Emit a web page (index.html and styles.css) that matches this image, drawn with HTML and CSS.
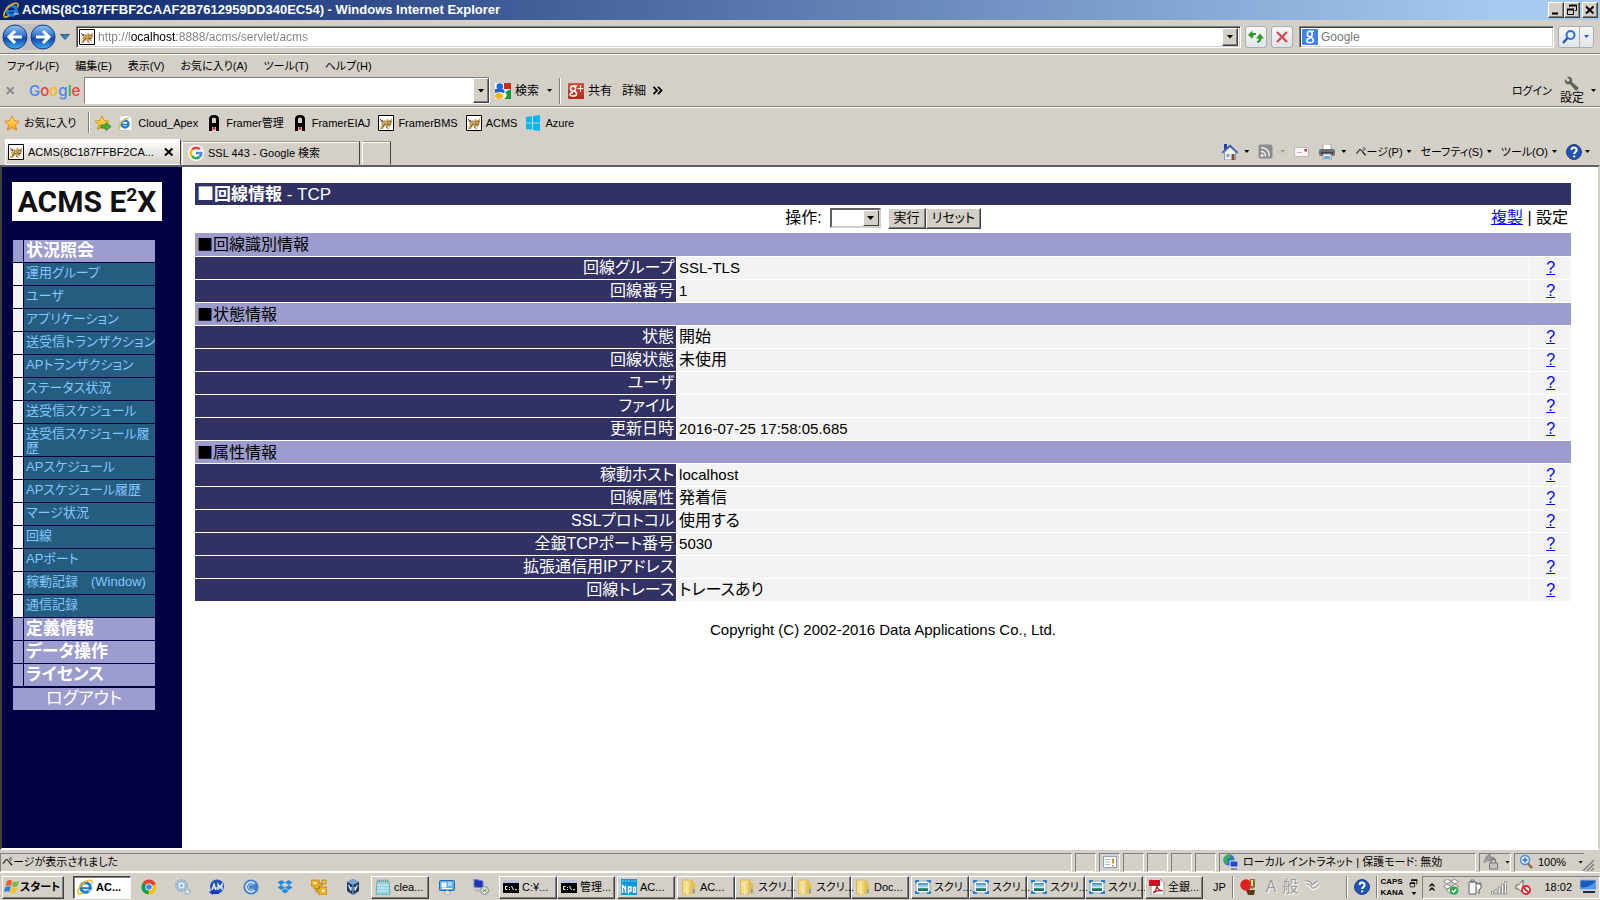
FILE: index.html
```html
<!DOCTYPE html>
<html lang="ja">
<head>
<meta charset="utf-8">
<title>ACMS - Windows Internet Explorer</title>
<link rel="stylesheet" href="styles.css">
</head>
<body>
<svg class="defs" aria-hidden="true">
  <defs>
    <linearGradient id="g-blue" x1="0" y1="0" x2="0" y2="1"><stop offset="0" stop-color="#8fc4f4"/><stop offset=".45" stop-color="#2f74cf"/><stop offset=".55" stop-color="#0f47a8"/><stop offset="1" stop-color="#3fb0f5"/></linearGradient>
    <linearGradient id="g-folder" x1="0" y1="0" x2="1" y2="0"><stop offset="0" stop-color="#fbeeb0"/><stop offset="1" stop-color="#dcb544"/></linearGradient>
    <linearGradient id="g-star" x1="0" y1="0" x2="0" y2="1"><stop offset="0" stop-color="#ffe97a"/><stop offset="1" stop-color="#f5a300"/></linearGradient>
    <linearGradient id="g-plus" x1="0" y1="0" x2="0" y2="1"><stop offset="0" stop-color="#d9503f"/><stop offset="1" stop-color="#b5291c"/></linearGradient>
    <linearGradient id="g-sky" x1="0" y1="0" x2="0" y2="1"><stop offset="0" stop-color="#3a86c8"/><stop offset=".6" stop-color="#d8eef8"/><stop offset=".7" stop-color="#2e8a5a"/><stop offset="1" stop-color="#1a5a80"/></linearGradient>
  </defs>
  <symbol id="ie" viewBox="0 0 16 16"><circle cx="8.5" cy="8.5" r="4.8" fill="none" stroke="#1b7fd6" stroke-width="3"/><path d="M5 9.2h10" stroke="#1b7fd6" stroke-width="2"/><path d="M11 10.8h5v2h-5z" fill="#fff" opacity=".5"/><path d="M1.5 15C-1 11 6 2 12.500 1.200c3-.3 3 2 1.800 4.300" fill="none" stroke="#f3b61f" stroke-width="1.500"/><path d="M1.500 15c1.500.6 3-.4 4.500-1.400" fill="none" stroke="#f3b61f" stroke-width="1.500"/></symbol>
  <symbol id="iepage" viewBox="0 0 16 16"><path d="M2 .5h9l3 3v12H2z" fill="#fff" stroke="#c8c8c8"/><circle cx="7" cy="9" r="3.500" fill="none" stroke="#1b7fd6" stroke-width="2.400"/><path d="M4 9.500h7" stroke="#1b7fd6" stroke-width="1.600"/><path d="M1.500 14C-.5 11 5 3.500 11 3" fill="none" stroke="#f3b61f" stroke-width="1.300"/></symbol>
  <symbol id="cat" viewBox="0 0 16 16"><path d="M.5.5h15v15H.5z" fill="#fff" stroke="#000"/><path d="M2 14l1-5 3-4 2 1 1-2.500L10.500 5H12l2-1.500V8l-2 2 1 3-4-1-2-1-2 3z" fill="#c9a05a"/><path d="M2 4l3 3M2.500 7L5 5M4 12l3-3M9 9l2 1 2-1M10 6.500v1M12.500 6v1M8 12l3 2" stroke="#5d5648" fill="none"/><path d="M2 9l2.500 1L3 13zM10 11l4 2.500h-4z" fill="#f4ecd8"/></symbol>
  <symbol id="framer" viewBox="0 0 10 16"><path fill-rule="evenodd" d="M0 16V4q0-4 5-4t5 4v12H7v-4H3v4zM3 8h4V4q0-1.500-2-1.500T3 4z" fill="#000"/><circle cx="5" cy="13.500" r="1.400" fill="#d0213c"/></symbol>
  <symbol id="win8" viewBox="0 0 16 16"><path d="M1 2l6-.8v6.300H1zM8 1l7-1v7.500H8zM1 8.500h6v6.200L1 14zM8 8.500h7V16l-7-1z" fill="#00b7f1"/></symbol>
  <symbol id="gsearch" viewBox="0 0 16 16"><path d="M0 0h16v16H0z" fill="#fff"/><path d="M9 0h7v6H9z" fill="#e8201c"/><path d="M16 6v10H9q5-3 1-7l6-3z" fill="#139a3e"/><circle cx="4.800" cy="3.500" r="3.300" fill="#2263e5"/><path d="M0 6h6q5 0 3 4l-4-1-5 1z" fill="#2263e5"/><ellipse cx="4" cy="13" rx="4" ry="3" fill="#f8b514"/></symbol>
  <symbol id="gplus" viewBox="0 0 16 16"><rect width="16" height="16" rx="1" fill="url(#g-plus)"/><ellipse cx="5" cy="5.500" rx="2.500" ry="2.600" fill="none" stroke="#fff" stroke-width="1.500"/><path d="M5 3h4M6 8c4 2 3 5-1 5s-4-3 0-3.500" fill="none" stroke="#fff" stroke-width="1.400"/><path d="M12.500 2v7M9.500 5.500h6" stroke="#fff"/></symbol>
  <symbol id="gg" viewBox="0 0 16 16"><circle cx="8" cy="8" r="8" fill="#fff"/><g fill="none" stroke-width="2.600"><path d="M4 4.700A5.200 5.200 0 0 1 11.900 4.400" stroke="#ea4335"/><path d="M4 11.300a5.200 5.200 0 0 1 0-6.600" stroke="#fbbc05"/><path d="M11.700 11.800A5.200 5.200 0 0 1 4 11.300" stroke="#34a853"/><path d="M8 8h5.200q0 2.500-1.500 3.800" stroke="#4285f4"/></g></symbol>
  <symbol id="g8" viewBox="0 0 16 16"><rect width="16" height="16" rx="1" fill="#3f83f1"/><ellipse cx="7.800" cy="5" rx="2.400" ry="2.700" fill="none" stroke="#fff" stroke-width="1.600"/><path d="M8 2.200h4M8 7.700c5 2 4 6 0 6s-5-4 .5-4.500" fill="none" stroke="#fff" stroke-width="1.500"/></symbol>
  <symbol id="star" viewBox="0 0 16 16"><path d="M8 .8l2.200 4.900 5.200.6-3.900 3.600 1.100 5.300L8 12.500l-4.600 2.700 1.100-5.300L.6 6.300l5.200-.6z" fill="url(#g-star)" stroke="#c98410" stroke-width=".8"/></symbol>
  <symbol id="staradd" viewBox="0 0 16 16"><path d="M7 .8l2 4.700 5 .6-3.700 3.400 1 5L7 12l-4.400 2.500 1-5L0 6.100l5-.6z" fill="url(#g-star)" stroke="#c98410" stroke-width=".8"/><path d="M6 10h5V7.500l5 4-5 4V13H6z" fill="#48b536" stroke="#1f7a18" stroke-width=".7"/></symbol>
  <symbol id="refresh" viewBox="0 0 16 16"><path d="M0 6l4.500-4.500V4H8v2H5.500v2H4.500v2z" fill="#2c9b2c"/><path d="M12 4.500l4 5h-2.500q0 4-4.500 4.500v-2q2-.5 2-2.500H8z" fill="#2c9b2c"/></symbol>
  <symbol id="stop" viewBox="0 0 16 16"><path d="M3 3l10 10M13 3L3 13" stroke="#d2474b" stroke-width="2.200"/></symbol>
  <symbol id="lens" viewBox="0 0 16 16"><circle cx="9.500" cy="6" r="4" fill="#e8f3ff" stroke="#2b6fe0" stroke-width="2"/><path d="M6.500 9L2 14" stroke="#1c55c0" stroke-width="2.400"/></symbol>
  <symbol id="lensp" viewBox="0 0 16 16"><circle cx="7" cy="6" r="4.500" fill="#d9ecff" stroke="#4b8fdc" stroke-width="1.500"/><path d="M10 9.500l4 4.500" stroke="#9a6a3a" stroke-width="2.600"/><path d="M7 3.500v5M4.500 6h5" stroke="#2b6fe0" stroke-width="1.500"/></symbol>
  <symbol id="wrench" viewBox="0 0 16 16"><path d="M1 3l3 3 2-2-3-3c4-1 6 2 5 5l7 6-3 3-6-7C3 9 0 7 1 3z" fill="#5d6257"/></symbol>
  <symbol id="home" viewBox="0 0 16 16"><path d="M2 0h3v4L2 6z" fill="#2340b8"/><path d="M2.500 8L8 3l5.500 5v8h-11z" fill="#eef3fb" stroke="#8a98b8"/><path d="M0 9l8-7.500L16 9" fill="none" stroke="#2e52b5" stroke-width="1.600"/><path d="M4.500 10h3v3h-3z" fill="#8a9bb8"/><path d="M9.500 10h3v6h-3z" fill="#8b4a2a"/></symbol>
  <symbol id="rss" viewBox="0 0 16 16"><rect x=".5" y=".5" width="14" height="14" rx="2" fill="#8c8c8c"/><circle cx="4" cy="11.500" r="1.500" fill="#eee"/><path d="M3 7.500q4.500 0 4.500 5M3 3.800q8.300 0 8.300 8.700" fill="none" stroke="#eee" stroke-width="1.600"/></symbol>
  <symbol id="mail" viewBox="0 0 16 16"><path d="M.5 3.500h14v9H.5z" fill="#f6f6f6" stroke="#b4b8be"/><path d="M10.500 5h2.500v2.500h-2.500z" fill="#d92b2b"/><path d="M3 8.500h5" stroke="#c8b0b0"/></symbol>
  <symbol id="printer" viewBox="0 0 16 16"><path d="M4 0h8v6H4z" fill="#fff" stroke="#aaa"/><rect x="0" y="5" width="16" height="7" rx="2" fill="#6c7077"/><path d="M2 8h12v2H2z" fill="#3d4046"/><path d="M4 10h8v6H4z" fill="#fff" stroke="#999"/><path d="M5 12h6v3H5z" fill="#6aa8e0"/></symbol>
  <symbol id="help" viewBox="0 0 16 16"><circle cx="8" cy="8" r="7.400" fill="#2355b8" stroke="#16357c"/><path d="M5.600 6c0-3.200 5-3.200 5 0 0 2-2.400 2-2.400 4" fill="none" stroke="#fff" stroke-width="2"/><path d="M7.200 11.500h2v1.800h-2z" fill="#fff"/></symbol>
  <symbol id="globe" viewBox="0 0 16 16"><circle cx="6" cy="6" r="5.700" fill="#2d6fd0"/><path d="M1 4c2-4 6-4 7-3L7 4 4 5l1 4-2 1Q0 7 1 4zM8 6l3-1v3L9 9z" fill="#38b54a"/><path d="M7 7h8v6H7z" fill="#2b44c8" stroke="#dce6f4"/><path d="M8 14h6v2H8z" fill="#8590a8"/></symbol>
  <symbol id="winflag" viewBox="0 0 16 16"><path d="M3 2q3-2 5 0L7 7Q4 5.500 1.500 7z" fill="#e8582a"/><path d="M9 2.300q3 1.700 6-.2L13.500 7q-3 2-5.500.2z" fill="#7cb83a"/><path d="M1.300 8q3-1.500 5.500 0l-1.500 5Q3 11.500 0 13z" fill="#2f7fd6"/><path d="M7.700 8.300q3 1.700 5.600 0L12 13.200q-3 2-5.700.2z" fill="#f6bf26"/></symbol>
  <symbol id="chrome" viewBox="0 0 16 16"><circle cx="8" cy="8" r="7.500" fill="#f4c20d"/><path d="M8 8L1.500 4.200A7.500 7.500 0 0 1 14.800 5z" fill="#db4437"/><path d="M8 8l-.5 7.500A7.500 7.500 0 0 1 1.500 4.200z" fill="#0f9d58"/><circle cx="8" cy="8" r="3.600" fill="#fff"/><circle cx="8" cy="8" r="2.800" fill="#4285f4"/></symbol>
  <symbol id="gears" viewBox="0 0 16 16"><circle cx="6.500" cy="6.500" r="5.500" fill="none" stroke="#8fb4d0" stroke-width="2" stroke-dasharray="2.400 1"/><circle cx="6.500" cy="6.500" r="3.800" fill="#e6f1f8" stroke="#9bbdd6" stroke-width="1.500"/><circle cx="6.500" cy="6.500" r="1.500" fill="#8fb4d0"/><circle cx="12.500" cy="12.500" r="2.500" fill="#dbe6ee" stroke="#93a8b8" stroke-width="1.500" stroke-dasharray="1.500 .7"/></symbol>
  <symbol id="acircle" viewBox="0 0 16 16"><circle cx="8" cy="7.500" r="7" fill="#2055b8"/><path d="M3 11l2-6 2 6M9 11V5l2 3 2-3v6M3.500 9h9" fill="none" stroke="#fff" stroke-width="1.100"/><path d="M0 13l4-2v1.500h6V15H4v1z" fill="#1034c8"/></symbol>
  <symbol id="ccircle" viewBox="0 0 16 16"><circle cx="8" cy="8" r="7.600" fill="#4380ce"/><path d="M11.500 4.800a4.800 4.800 0 1 0 0 6.400" fill="none" stroke="#d6e6fa" stroke-width="1.800"/><path d="M10 6.500a2.500 2.500 0 1 0 0 3" fill="none" stroke="#b9d2f2"/></symbol>
  <symbol id="dropbox" viewBox="0 0 16 16"><path d="M4.500 1L8 3.500 4 6 .5 3.500zM11.500 1l4 2.500L12 6 8 3.500zM4 6l4 2.500L4.500 11 .5 8.500zM12 6l3.500 2.500-4 2.500L8 8.500zM4.500 12L8 9.500l3.500 2.500L8 14.500z" fill="#1a8be8"/></symbol>
  <symbol id="vmware" viewBox="0 0 16 16"><path d="M0 1h8v3h3v3H8v3H3V7H0zM8 8h8v8H8v-3H5v-3h3z" fill="#eeb12c" stroke="#a8720c" stroke-width=".7"/><path d="M2.500 3h3v2h-3zM11 10.500h2.500V13H11z" fill="#fff7dc"/><path d="M11 1h4v4h-4z" fill="#f2c14e" stroke="#a8720c" stroke-width=".7"/></symbol>
  <symbol id="vbox" viewBox="0 0 16 16"><path d="M8 0l6 3v9l-6 4-6-4V3z" fill="#1d3a60"/><path d="M2 3l6 3 6-3-6-3z" fill="#7ea7d0"/><path d="M8 6v10" stroke="#9cc0e4"/><path d="M3.500 6L6 11.500V8M12.500 6L10 11.500V8" stroke="#dce9f6" fill="none" stroke-width="1.300"/></symbol>
  <symbol id="note" viewBox="0 0 16 16"><path d="M2 2h12l1 14H1z" fill="#8fd0dc" stroke="#5a98a8" stroke-width=".7"/><path d="M2 6h12M2 9h12M2 12h12" stroke="#d9f3f6"/><path d="M2 1.500h12" stroke="#8a8f94" stroke-width="2" stroke-dasharray="1 1"/></symbol>
  <symbol id="panel" viewBox="0 0 16 16"><rect x=".5" y="1.500" width="15" height="10" rx="1" fill="#5eb0ea" stroke="#2c6ca8"/><path d="M3 4h4v4H3zM9 4h4M9 6h4M3 9.500h10" fill="#e8f6ff" stroke="#fff"/><path d="M5 14l3-3 4 3-3 2z" fill="#e8e8e8" stroke="#888" stroke-width=".6"/></symbol>
  <symbol id="remote" viewBox="0 0 16 16"><path d="M1 0l9 2v7L1 8z" fill="#1a33c0" stroke="#7b87a6"/><path d="M3 10l7 1-3 2-6-1z" fill="#b4bac6"/><circle cx="11.500" cy="11.500" r="4" fill="#dfe6dc" stroke="#889"/><path d="M9.500 10l2 1.500-2 1.500M13.500 10l-2 1.500 2 1.500" fill="none" stroke="#2d9b2d"/></symbol>
  <symbol id="cmd" viewBox="0 0 16 16"><path d="M0 2h16v12H0z" fill="#000"/><path d="M0 1h16v3H0z" fill="#b8c4dc"/><path d="M4.500 7.500h-2v3h2M6.500 8v.8M6.500 10v.8M8.500 7l2 4M12 10.700h2" fill="none" stroke="#fff"/></symbol>
  <symbol id="mpo" viewBox="0 0 16 16"><path d="M0 0h16v16H0z" fill="#0c98dc"/><path d="M1 2h14" stroke="#7fd0f5" stroke-dasharray="2 1"/><path d="M1.500 14V6.500l3 4V6.500V14M7.500 15V8h2.500v4H7.500M12.500 8.500h2V13h-2z" fill="none" stroke="#fff" stroke-width="1.400"/></symbol>
  <symbol id="folder" viewBox="0 0 16 16"><path d="M1.500 1H8v14H1.500z" fill="#f4dd86" stroke="#d0aa48" stroke-width=".7"/><path d="M5 2.500L12 0v14l-7 2z" fill="url(#g-folder)"/><path d="M12 4h2.500v11h-6z" fill="#e5bf55"/><path d="M12.800 10v4" stroke="#4aa4dc" stroke-width="1.500"/></symbol>
  <symbol id="pic" viewBox="0 0 16 16"><path d="M1 2h14v12H1z" fill="#fff" stroke="#8caac4"/><path d="M3 4h10v8H3z" fill="url(#g-sky)"/><path d="M1 4V2h3M12 2h3v2M1 12v2h3M12 14h3v-2" fill="none" stroke="#2f83cc" stroke-width="2"/></symbol>
  <symbol id="pdf" viewBox="0 0 16 16"><path d="M2 0h9l4 4v12H2z" fill="#fff" stroke="#999"/><path d="M0 1h11v6H0z" fill="#c4161c"/><path d="M4 14c4-3 4-6 4-8 0 4 2 5 6 6-4-1-7 0-10 2z" fill="none" stroke="#c4161c" stroke-width="1.200"/></symbol>
  <symbol id="pen" viewBox="0 0 16 16"><circle cx="6" cy="6" r="5.700" fill="#e02020"/><path d="M10 0h5v8l-3 2-2-2z" fill="#8a6a30"/><path d="M6 11h9l-1 5H8z" fill="#5a3a18"/><path d="M11 1h2v6h-2z" fill="#f1d58a"/></symbol>
  <symbol id="hand" viewBox="0 0 16 16"><path d="M1 3q5-1 7 4l6-4M2 6q4 0 6 4 4 1 7-4" fill="none" stroke="#fff" stroke-width="2"/><path d="M1 2q5-1 7 4l6-4M2 5q4 0 6 4 4 1 7-4" fill="none" stroke="#999" stroke-width="1.200"/></symbol>
  <symbol id="dbtray" viewBox="0 0 16 16"><path d="M4.500 0L8 2.500 4 5 .5 2.500zM11.500 0l4 2.500L12 5 8 2.500zM4 5l4 2.500L4.500 10 .5 7.500zM12 5l3.500 2.500-4 2.500L8 7.500zM3 11l4-2 2 2-1 4z" fill="#f4f4f4" stroke="#777" stroke-width=".8"/><circle cx="11" cy="11.500" r="4.300" fill="#2fa84f"/><path d="M9 11.500l1.500 1.700 2.700-3" fill="none" stroke="#fff" stroke-width="1.400"/></symbol>
  <symbol id="plug" viewBox="0 0 16 16"><path d="M2 3h7v12H2zM4 1h3v2H4z" fill="#f4f4f4" stroke="#666"/><path d="M9 5h5v4l-2 2v4M10 3v2M13 3v2" fill="#fff" stroke="#555"/></symbol>
  <symbol id="signal" viewBox="0 0 16 16"><path d="M.5 12.500h2V15h-2zM4 10.500h2V15H4zM7.300 8h2v7h-2zM10.600 5h2v10h-2zM13.500 2.500h2V15h-2z" fill="#fff" stroke="#777" stroke-width=".7"/></symbol>
  <symbol id="mute" viewBox="0 0 16 16"><path d="M1 6h2.500L8 1v13L3.500 10H1z" fill="#e8e8e8" stroke="#666"/><circle cx="11" cy="11" r="4" fill="#fff" stroke="#d8242c" stroke-width="1.800"/><path d="M8.500 8.500l5 5" stroke="#d8242c" stroke-width="1.800"/></symbol>
  <symbol id="desk" viewBox="0 0 16 16"><path d="M0 1h16v9H0z" fill="#1d5bb8" stroke="#9db4d0"/><path d="M0 8q8 2 16-6v8H0z" fill="#4f9be8"/><path d="M3 12h12v2H3z" fill="#1b2a44"/></symbol>
  <symbol id="alert" viewBox="0 0 16 16"><path d="M1.500 2.500h13v11h-13z" fill="#fff" stroke="#8aa0bc"/><path d="M3 5.500h5M3 8h5M3 10.500h5" stroke="#a9b8cc"/><path d="M11 4.500v5M11 11v1.500" stroke="#e8902a" stroke-width="2"/></symbol>
  <symbol id="lock" viewBox="0 0 16 16"><path d="M1 9q1-6 6-6 3 0 5 2M7 0L3 3.500 7 7z" fill="#a8a8a8" stroke="#8d8d8d" stroke-width="1.300"/><path d="M6.500 9h8v6h-8z" fill="#c4c4c4" stroke="#777"/><path d="M8.500 9V7q0-2 2-2t2 2v2" fill="none" stroke="#777" stroke-width="1.300"/></symbol>
  <symbol id="restore" viewBox="0 0 12 12"><path d="M3.500 3V1.500h7v5H9" fill="none" stroke="#000"/><path d="M3 1.500h8" stroke="#000" stroke-width="2"/><path d="M1.500 5.500h6v5h-6z" fill="none" stroke="#000"/><path d="M1 5.500h7" stroke="#000" stroke-width="2"/></symbol>
  <symbol id="x" viewBox="0 0 12 12"><path d="M2 2.500l7.500 7M9.500 2.500L2 9.500" stroke="currentColor" stroke-width="2"/></symbol>
</svg>

<div class="window">
  <header class="titlebar">
    <svg class="i16"><use href="#ie"/></svg>
    <h1 class="caption">ACMS(8C187FFBF2CAAF2B7612959DD340EC54) - Windows Internet Explorer</h1>
    <div class="winbtns">
      <button class="wbtn" aria-label="最小化"><svg viewBox="0 0 12 12"><path d="M2 9.500h6" stroke="#000" stroke-width="2"/></svg></button>
      <button class="wbtn" aria-label="元に戻す"><svg><use href="#restore"/></svg></button>
      <button class="wbtn wclose" aria-label="閉じる"><svg><use href="#x"/></svg></button>
    </div>
  </header>

  <div class="addressrow">
    <div class="navbtns">
      <button class="round" aria-label="戻る"><svg viewBox="0 0 26 26"><circle cx="13" cy="13" r="12" fill="url(#g-blue)" stroke="#1b3f85"/><path d="M13 7l-6 6 6 6M7.500 13H20" fill="none" stroke="#fff" stroke-width="3"/></svg></button>
      <button class="round" aria-label="進む"><svg viewBox="0 0 26 26"><circle cx="13" cy="13" r="12" fill="url(#g-blue)" stroke="#1b3f85"/><path d="M13 7l6 6-6 6M18.500 13H6" fill="none" stroke="#fff" stroke-width="3"/></svg></button>
    </div>
    <svg class="hist" viewBox="0 0 10 6"><path d="M.5.5h9L5 5.500z" fill="#2e86cc" stroke="#173d78" stroke-width=".7"/></svg>
    <div class="field address">
      <svg class="i16"><use href="#cat"/></svg>
      <input class="url" type="text" aria-label="アドレス" value="http://localhost:8888/acms/servlet/acms">
      <button class="drop" aria-label="履歴"><i class="tri"></i></button>
    </div>
    <button class="soft" aria-label="更新"><svg class="i16"><use href="#refresh"/></svg></button>
    <button class="soft" aria-label="中止"><svg class="i16"><use href="#stop"/></svg></button>
    <div class="field search">
      <svg class="i16"><use href="#g8"/></svg>
      <input type="text" aria-label="検索" placeholder="Google">
    </div>
    <div class="split"><button aria-label="検索する"><svg class="i16"><use href="#lens"/></svg></button><button aria-label="検索オプション"><i class="tri blue"></i></button></div>
  </div>

  <nav class="menubar">
    <button>ファイル(F)</button><button>編集(E)</button><button>表示(V)</button><button>お気に入り(A)</button><button>ツール(T)</button><button>ヘルプ(H)</button>
  </nav>

  <div class="googlebar">
    <button class="gx" aria-label="ツールバーを閉じる"><svg><use href="#x"/></svg></button>
    <span class="glogo"><b class="c1">G</b><b class="c2">o</b><b class="c3">o</b><b class="c1">g</b><b class="c4">l</b><b class="c2">e</b></span>
    <div class="field gfield"><input type="text" aria-label="Google 検索"><button class="drop" aria-label="候補"><i class="tri"></i></button></div>
    <button class="gsearch"><svg class="i16"><use href="#gsearch"/></svg>検索<i class="tri"></i></button>
    <span class="vsep"></span>
    <button class="gshare"><svg class="i16"><use href="#gplus"/></svg>共有</button>
    <button class="gmore">詳細<svg class="chev" viewBox="0 0 12 10"><path d="M1 1l4 4-4 4M6 1l4 4-4 4" fill="none" stroke="#000" stroke-width="2"/></svg></button>
    <button class="login">ログイン</button>
    <button class="gset"><span class="gsetcol"><svg class="i16"><use href="#wrench"/></svg>設定</span><i class="tri"></i></button>
  </div>

  <nav class="favbar">
    <button class="favmain"><svg class="i16"><use href="#star"/></svg>お気に入り</button>
    <span class="vsep"></span>
    <button aria-label="お気に入りに追加" class="favadd"><svg class="i16"><use href="#staradd"/></svg></button>
    <a href="#"><svg class="i16"><use href="#iepage"/></svg>Cloud_Apex</a>
    <a href="#"><svg class="i16"><use href="#framer"/></svg>Framer管理</a>
    <a href="#"><svg class="i16"><use href="#framer"/></svg>FramerEIAJ</a>
    <a href="#"><svg class="i16"><use href="#cat"/></svg>FramerBMS</a>
    <a href="#"><svg class="i16"><use href="#cat"/></svg>ACMS</a>
    <a href="#"><svg class="i16"><use href="#win8"/></svg>Azure</a>
  </nav>

  <div class="tabrow">
    <div class="tab active"><svg class="i16"><use href="#cat"/></svg><span class="tabtext">ACMS(8C187FFBF2CA...</span><button class="tabx" aria-label="タブを閉じる"><svg><use href="#x"/></svg></button></div>
    <div class="tab"><svg class="i16"><use href="#gg"/></svg><span class="tabtext">SSL 443 - Google 検索</span></div>
    <button class="tab newtab" aria-label="新しいタブ"></button>
    <div class="cmdbar">
      <button aria-label="ホーム"><svg class="i16"><use href="#home"/></svg><i class="tri far"></i></button>
      <button aria-label="フィード"><svg class="i16"><use href="#rss"/></svg><i class="tri far dim"></i></button>
      <button aria-label="メール"><svg class="i16"><use href="#mail"/></svg></button>
      <button aria-label="印刷"><svg class="i16"><use href="#printer"/></svg><i class="tri far"></i></button>
      <button class="wide">ページ(P)<i class="tri"></i></button>
      <button class="wide">セーフティ(S)<i class="tri"></i></button>
      <button class="wide">ツール(O)<i class="tri"></i></button>
      <button aria-label="ヘルプ"><svg class="i16"><use href="#help"/></svg><i class="tri"></i></button>
    </div>
  </div>

  <div class="viewport">
    <aside class="sidebar">
      <div class="logo">ACMS&nbsp;E<sup>2</sup>X</div>
      <ul class="nav">
        <li class="head"><a href="#">状況照会</a></li>
        <li><a href="#">運用グループ</a></li>
        <li><a href="#">ユーザ</a></li>
        <li><a href="#">アプリケーション</a></li>
        <li><a href="#">送受信トランザクション</a></li>
        <li><a href="#">APトランザクション</a></li>
        <li><a href="#">ステータス状況</a></li>
        <li><a href="#">送受信スケジュール</a></li>
        <li><a href="#">送受信スケジュール履<br>歴</a></li>
        <li><a href="#">APスケジュール</a></li>
        <li><a href="#">APスケジュール履歴</a></li>
        <li><a href="#">マージ状況</a></li>
        <li><a href="#">回線</a></li>
        <li><a href="#">APポート</a></li>
        <li><a href="#">稼動記録　(Window)</a></li>
        <li><a href="#">通信記録</a></li>
        <li class="head"><a href="#">定義情報</a></li>
        <li class="head"><a href="#">データ操作</a></li>
        <li class="head"><a href="#">ライセンス</a></li>
      </ul>
      <a class="logout" href="#">ログアウト</a>
    </aside>

    <main class="main">
      <h2 class="pagetitle"><span class="sq">■</span>回線情報 <span class="thin">- TCP</span></h2>
      <div class="ops">
        <form class="opform">
          <label for="op">操作:</label>
          <span class="selwrap"><select id="op"><option></option></select><i class="selarrow"><i class="tri"></i></i></span>
          <button type="button" class="cbtn run">実行</button><button type="reset" class="cbtn">リセット</button>
        </form>
        <div class="oplinks"><a href="#">複製</a> | 設定</div>
      </div>
      <table class="info">
        <colgroup><col class="c-label"><col class="c-value"><col class="c-help"></colgroup>
        <tbody>
          <tr><th class="sec" colspan="3"><span class="sq">■</span>回線識別情報</th></tr>
          <tr><th>回線グループ</th><td class="lat">SSL-TLS</td><td class="q"><a href="#">?</a></td></tr>
          <tr><th>回線番号</th><td class="lat">1</td><td class="q"><a href="#">?</a></td></tr>
          <tr><th class="sec" colspan="3"><span class="sq">■</span>状態情報</th></tr>
          <tr><th>状態</th><td>開始</td><td class="q"><a href="#">?</a></td></tr>
          <tr><th>回線状態</th><td>未使用</td><td class="q"><a href="#">?</a></td></tr>
          <tr><th>ユーザ</th><td></td><td class="q"><a href="#">?</a></td></tr>
          <tr><th>ファイル</th><td></td><td class="q"><a href="#">?</a></td></tr>
          <tr><th>更新日時</th><td class="lat">2016-07-25 17:58:05.685</td><td class="q"><a href="#">?</a></td></tr>
          <tr><th class="sec" colspan="3"><span class="sq">■</span>属性情報</th></tr>
          <tr><th>稼動ホスト</th><td class="lat">localhost</td><td class="q"><a href="#">?</a></td></tr>
          <tr><th>回線属性</th><td>発着信</td><td class="q"><a href="#">?</a></td></tr>
          <tr><th>SSLプロトコル</th><td>使用する</td><td class="q"><a href="#">?</a></td></tr>
          <tr><th>全銀TCPポート番号</th><td class="lat">5030</td><td class="q"><a href="#">?</a></td></tr>
          <tr><th>拡張通信用IPアドレス</th><td></td><td class="q"><a href="#">?</a></td></tr>
          <tr><th>回線トレース</th><td>トレースあり</td><td class="q"><a href="#">?</a></td></tr>
        </tbody>
      </table>
      <p class="copy">Copyright (C) 2002-2016 Data Applications Co., Ltd.</p>
    </main>
  </div>

  <footer class="status">
    <div class="pane msg">ページが表示されました</div>
    <div class="pane box"></div>
    <div class="pane box"><svg class="i16"><use href="#alert"/></svg></div>
    <div class="pane box"></div>
    <div class="pane box"></div>
    <div class="pane box"></div>
    <div class="pane box"></div>
    <div class="pane zone"><svg class="i16"><use href="#globe"/></svg>ローカル イントラネット | 保護モード: 無効</div>
    <div class="pane lockp"><svg class="i16"><use href="#lock"/></svg><i class="tri"></i></div>
    <div class="pane zoomp"><svg class="i16"><use href="#lensp"/></svg>100%<i class="tri"></i></div>
    <svg class="grip" viewBox="0 0 12 12"><path d="M1 12L12 1M5 12l7-7M9 12l3-3" stroke="#808080" stroke-width="1.500"/></svg>
  </footer>

  <div class="taskbar">
    <button class="tbtn start"><svg class="i16"><use href="#winflag"/></svg>スタート</button>
    <button class="tbtn on"><svg class="i16"><use href="#ie"/></svg>AC...</button>
    <div class="quick"><svg><use href="#chrome"/></svg><svg><use href="#gears"/></svg><svg><use href="#acircle"/></svg><svg><use href="#ccircle"/></svg><svg><use href="#dropbox"/></svg><svg><use href="#vmware"/></svg><svg><use href="#vbox"/></svg></div>
    <button class="tbtn"><svg class="i16"><use href="#note"/></svg>clea...</button>
    <div class="quick"><svg><use href="#panel"/></svg><svg><use href="#remote"/></svg></div>
    <div class="tgroup"><button class="tbtn"><svg class="i16"><use href="#cmd"/></svg>C:¥...</button><button class="tbtn"><svg class="i16"><use href="#cmd"/></svg>管理...</button></div>
    <div class="tgroup"><button class="tbtn"><svg class="i16"><use href="#mpo"/></svg>AC...</button></div>
    <div class="tgroup"><button class="tbtn"><svg class="i16"><use href="#folder"/></svg>AC...</button><button class="tbtn"><svg class="i16"><use href="#folder"/></svg>スクリ...</button><button class="tbtn"><svg class="i16"><use href="#folder"/></svg>スクリ...</button><button class="tbtn"><svg class="i16"><use href="#folder"/></svg>Doc...</button></div>
    <div class="tgroup"><button class="tbtn"><svg class="i16"><use href="#pic"/></svg>スクリ...</button><button class="tbtn"><svg class="i16"><use href="#pic"/></svg>スクリ...</button><button class="tbtn"><svg class="i16"><use href="#pic"/></svg>スクリ...</button><button class="tbtn"><svg class="i16"><use href="#pic"/></svg>スクリ...</button></div>
    <div class="tgroup"><button class="tbtn"><svg class="i16"><use href="#pdf"/></svg>全銀...</button></div>
    <div class="ime">
      <span class="jp">JP</span><span class="vsep"></span>
      <svg class="i16"><use href="#pen"/></svg>
      <span class="mode alpha">A</span><span class="mode">般</span><svg class="i16"><use href="#hand"/></svg>
      <span class="vsep last"></span>
      <svg class="i16"><use href="#help"/></svg>
      <span class="vsep near"></span>
      <span class="caps"><span>CAPS</span><span>KANA</span></span>
      <span class="capsicons"><svg viewBox="0 0 12 12"><use href="#restore"/></svg><i class="tri"></i></span>
    </div>
    <div class="tray">
      <svg class="up" viewBox="0 0 6 10"><path d="M.5 4.500L3 2l2.500 2.500M.5 8.500L3 6l2.500 2.500" fill="none" stroke="#000" stroke-width="1.300"/></svg>
      <svg class="i16"><use href="#dbtray"/></svg><svg class="i16"><use href="#plug"/></svg><svg class="i16"><use href="#signal"/></svg><svg class="i16"><use href="#mute"/></svg>
      <time>18:02</time>
      <svg class="i16"><use href="#desk"/></svg>
    </div>
  </div>
</div>
</body>
</html>
```
FILE: styles.css
```css
* { box-sizing: border-box; }

:root {
  --face: #d4d0c8;
  --shadow: #808080;
  --dark: #404040;
  --navy: #000042;
  --indigo: #313163;
  --lilac: #9c9cce;
  --teal: #245d80;
}

body {
  margin: 0;
  background: var(--face);
  color: #000;
  font: 11px/16px "Liberation Sans", "Noto Sans CJK JP", sans-serif;
  font-feature-settings: "palt";
}

button, input, select {
  margin: 0;
  padding: 0;
  border: 0;
  background: none;
  color: inherit;
  font: inherit;
  font-feature-settings: inherit;
}

button { white-space: nowrap; }
svg { display: block; flex: none; }
.defs { position: absolute; width: 0; height: 0; }
.i16 { width: 16px; height: 16px; }

.tri {
  display: block;
  flex: none;
  width: 5px;
  height: 3px;
  background: #000;
  clip-path: polygon(0 0, 100% 0, 50% 100%);
}
.tri.blue { background: #1560d8; }
.tri.dim { background: #999; }

.vsep {
  flex: none;
  width: 2px;
  border-left: 1px solid var(--shadow);
  border-right: 1px solid #fff;
}

.window {
  display: flex;
  flex-direction: column;
  min-height: 100vh;
}

/* title bar */
.titlebar {
  display: flex;
  align-items: center;
  gap: 3px;
  height: 20px;
  padding: 0 2px 0 3px;
  background: linear-gradient(90deg, #0a246a, #a6caf0 94%);
}
.caption {
  flex: 1;
  margin: 0;
  color: #fff;
  font-size: 13px;
  line-height: 20px;
  font-weight: bold;
}
.winbtns { display: flex; }
.wbtn {
  display: flex;
  align-items: center;
  justify-content: center;
  width: 16px;
  height: 16px;
  background: var(--face);
  border: 1px solid;
  border-color: #fff var(--dark) var(--dark) #fff;
  box-shadow: inset -1px -1px var(--shadow);
}
.wbtn svg { width: 12px; height: 12px; }
.wclose { margin-left: 2px; }

/* address row */
.addressrow {
  display: flex;
  align-items: center;
  gap: 4px;
  height: 34px;
  padding: 0 6px 0 2px;
  border-bottom: 1px solid var(--shadow);
  box-shadow: 0 1px #fff;
  font-size: 12px;
}
.navbtns {
  display: flex;
  gap: 2px;
  border-radius: 13px;
  background: #c0c0c0;
}
.round { width: 26px; height: 26px; }
.round svg { width: 26px; height: 26px; }
.hist { width: 10px; height: 6px; margin-right: 2px; }
.field {
  display: flex;
  align-items: center;
  gap: 3px;
  height: 22px;
  padding-left: 1px;
  background: #fff;
  border: 1px solid;
  border-color: var(--shadow) #fff #fff var(--shadow);
  box-shadow: inset 1px 1px var(--dark), inset -1px -1px var(--face);
}
.field input { flex: 1; min-width: 0; height: 16px; outline: 0; }
.address { flex: 1; padding: 0 2px; }
.address .url {
  color: transparent;
  caret-color: #000;
  background: linear-gradient(90deg, #808080 33px, #000 33px, #000 79px, #808080 79px);
  -webkit-background-clip: text;
  background-clip: text;
}
.drop {
  display: flex;
  align-items: center;
  justify-content: center;
  width: 16px;
  height: 18px;
  background: var(--face);
  border: 1px solid;
  border-color: #fff var(--dark) var(--dark) #fff;
  box-shadow: inset -1px -1px var(--shadow);
}
.drop .tri, .selarrow .tri { width: 7px; height: 4px; }
.soft, .split {
  display: flex;
  align-items: center;
  justify-content: center;
  height: 22px;
  background: linear-gradient(#f6f6f6, #e2e4e8);
  border: 1px solid #a9adb8;
  border-radius: 3px;
}
.soft { width: 22px; }
.search { width: 255px; margin-left: 2px; padding-left: 2px; }
.search input::placeholder { color: #777; opacity: 1; }
.split button { display: flex; align-items: center; justify-content: center; height: 20px; width: 20px; }
.split button + button { width: 14px; border-left: 1px solid #a9adb8; }

/* menu */
.menubar {
  display: flex;
  gap: 16px;
  height: 21px;
  padding: 2px 7px 0;
}

/* Google toolbar */
.googlebar {
  display: flex;
  align-items: center;
  height: 32px;
  padding-right: 4px;
  border-bottom: 1px solid var(--shadow);
  box-shadow: 0 1px #fff;
}
.gx { margin: 0 13px 0 5px; color: #888; }
.gx svg { width: 11px; height: 11px; }
.glogo { width: 55px; font: 15px/26px Inter, sans-serif; }
.glogo b { font-weight: 500; }
.c1 { color: #4285f4; }
.c2 { color: #ea4335; }
.c3 { color: #fbbc05; }
.c4 { color: #34a853; }
.gfield { width: 406px; height: 27px; box-shadow: none; }
.gfield .drop { height: 25px; }
.gsearch, .gshare, .gmore, .gset { font-size: 12px; }
.gsearch, .gshare { display: flex; align-items: center; gap: 4px; }
.gsearch { margin: 0 7px 0 5px; }
.gsearch .tri { margin-left: 4px; }
.googlebar .vsep { height: 26px; margin-right: 7px; }
.gmore { display: flex; align-items: center; gap: 6px; margin-left: 10px; }
.chev { width: 12px; height: 9px; }
.login { margin-left: auto; }
.gset { display: flex; align-items: center; gap: 7px; margin-left: 8px; }
.gsetcol { display: flex; flex-direction: column; align-items: center; line-height: 13px; }

/* favorites */
.favbar {
  display: flex;
  align-items: center;
  gap: 8px;
  height: 31px;
  padding: 0 4px;
}
.favbar a, .favmain { display: flex; align-items: center; gap: 4px; color: #000; text-decoration: none; }
.favbar .vsep { height: 21px; margin: 0 -3px 0 4px; }
.favadd { margin-right: -1px; }

/* tabs */
.tabrow {
  display: flex;
  align-items: flex-end;
  height: 27px;
  padding-left: 5px;
}
.tab {
  display: flex;
  align-items: center;
  gap: 4px;
  width: 178px;
  height: 24px;
  margin-left: 1px;
  padding: 0 5px;
  border: 1px solid;
  border-color: #9a978f var(--dark) transparent #fff;
  box-shadow: inset 0 1px #fff;
}
.tab.active {
  width: 176px;
  height: 26px;
  margin-left: 0;
  padding-left: 2px;
  background: linear-gradient(#fff, #d4d0c8);
  border-top-color: #fff;
}
.tabtext { flex: 1; white-space: nowrap; }
.tabx svg { width: 12px; height: 12px; }
.tab.newtab { width: 29px; margin-left: 2px; }
.cmdbar { display: flex; align-items: center; height: 27px; gap: 9px; margin-left: auto; padding-right: 10px; }
.cmdbar button { display: flex; align-items: center; gap: 3px; }
.cmdbar .tri.far { margin-left: 3px; }
.cmdbar .wide { gap: 4px; }

/* page */
.viewport {
  display: flex;
  flex: 1;
  background: #fff;
  border: 2px solid;
  border-color: var(--dark) var(--face) #fff var(--dark);
  border-top-color: #606060;
}
.sidebar {
  flex: none;
  width: 180px;
  padding: 15px 27px 0 11px;
  background: var(--navy);
}
.logo {
  width: 150px;
  height: 39px;
  margin: 0 0 19px -1px;
  background: #fff;
  color: #111;
  font: bold 30px/39px Roboto, "Liberation Sans", sans-serif;
  text-align: center;
  white-space: nowrap;
}
.logo sup { font-size: 19px; line-height: 0; }
.nav { display: grid; gap: 1px; margin: 0; padding: 0; list-style: none; }
.nav li { display: grid; grid-template-columns: 10px 1fr; gap: 1px; min-height: 22px; }
.nav li::before { content: ""; background: #f2f2f2; }
.nav a {
  display: block;
  padding: 3px 0 1px 2px;
  background: var(--teal);
  color: #84c6ff;
  font-size: 13px;
  line-height: 14px;
  text-decoration: none;
  white-space: nowrap;
}
.nav .head::before, .nav .head a { background: var(--lilac); }
.nav .head a { padding-top: 0; padding-bottom: 0; color: #fff; font-size: 17px; line-height: 22px; font-weight: bold; }
.logout {
  display: block;
  margin-top: 2px;
  background: var(--lilac);
  color: #fff;
  font-size: 17px;
  line-height: 22px;
  text-align: center;
  text-decoration: none;
}

.main { flex: 1; padding: 16px 27px 0 13px; font-size: 16px; line-height: 22px; }
.sq { font-family: "Noto Sans CJK JP", sans-serif; font-feature-settings: normal; }
.pagetitle {
  height: 22px;
  margin: 0;
  padding-left: 2px;
  background: var(--indigo);
  color: #fff;
  font-size: 17px;
  line-height: 20px;
}
.thin { font-weight: normal; }
.ops { display: grid; grid-template-columns: 1fr auto 1fr; align-items: center; height: 28px; padding-bottom: 2px; }
.opform { grid-column: 2; display: flex; align-items: center; }
.selwrap { position: relative; margin: 0 7px 0 8px; }
.selwrap select {
  appearance: none;
  display: block;
  width: 51px;
  height: 20px;
  background: #fff;
  border: 2px solid;
  border-color: #606060 var(--face) var(--face) #606060;
  border-radius: 0;
}
.selarrow {
  position: absolute;
  top: 2px;
  right: 2px;
  display: flex;
  align-items: center;
  justify-content: center;
  width: 16px;
  height: 16px;
  background: var(--face);
  border: 1px solid;
  border-color: #fff var(--dark) var(--dark) #fff;
  pointer-events: none;
}
.cbtn {
  height: 21px;
  padding: 0 5px;
  background: var(--face);
  border: 1px solid;
  border-color: #fff var(--dark) var(--dark) #fff;
  box-shadow: inset -1px -1px var(--shadow);
  font-size: 13px;
  line-height: 18px;
}
.oplinks { padding-right: 3px; text-align: right; line-height: 20px; }
a { color: #00f; }

.info { width: 100%; border-collapse: collapse; table-layout: fixed; }
.c-label { width: 35%; }
.c-help { width: 3%; }
.info tr + tr { border-top: 1px solid #fff; }
.info th, .info td { height: 23px; padding: 0 2px; line-height: 20px; font-weight: normal; }
.info th { background: var(--indigo); color: #fff; text-align: right; }
.info td { background: #f3f3f3; border-left: 1px solid #fff; }
.info .lat { font-size: 15px; }
.info .q { text-align: center; }
.info .sec { background: var(--lilac); color: #000; text-align: left; }
.copy { margin: 18px 0 0; font-size: 15px; line-height: 22px; text-align: center; }

/* status bar */
.status { display: flex; align-items: center; gap: 3px; height: 22px; padding: 2px 6px 0 0; }
.pane {
  display: flex;
  align-items: center;
  gap: 4px;
  height: 19px;
  padding: 0 3px;
  border: 1px solid;
  border-color: var(--shadow) #fff #fff var(--shadow);
}
.msg { flex: 1; padding-left: 1px; }
.box { width: 21px; padding: 0 2px; }
.zone { width: 257px; }
.lockp { width: 32px; gap: 6px; }
.zoomp { width: 70px; margin-right: -5px; border-right: 0; }
.zoomp .tri { margin-left: 8px; }
.grip { width: 12px; height: 12px; margin-top: 6px; }

/* taskbar */
.taskbar {
  display: flex;
  align-items: center;
  height: 28px;
  padding: 2px 0 1px 2px;
  border-top: 1px solid #fff;
}
.tbtn {
  display: flex;
  align-items: center;
  gap: 3px;
  width: 58px;
  height: 23px;
  padding-left: 3px;
  border: 1px solid;
  border-color: #fff var(--dark) var(--dark) #fff;
  box-shadow: inset -1px -1px var(--shadow);
}
.start { width: 62px; padding-left: 1px; gap: 0; font-weight: bold; margin-right: 9px; }
.tbtn.on {
  background: #fff;
  border-color: var(--dark) #fff #fff var(--dark);
  box-shadow: inset 1px 1px var(--shadow);
  font-weight: bold;
}
.quick { display: flex; gap: 18px; padding: 0 10px; }
.quick svg { width: 16px; height: 16px; }
.tgroup { display: flex; margin-right: 2px; }
.ime { display: flex; align-items: center; gap: 6px; margin-left: auto; }
.ime .vsep { height: 22px; }
.mode { color: #999; font-size: 16px; text-shadow: 1px 1px #fff; }
.mode.alpha { margin-left: 4px; }
.ime .last { margin-left: 20px; }
.ime .near { margin-right: -4px; }
.caps { display: grid; font-size: 8px; line-height: 11px; font-weight: bold; width: 23px; }
.capsicons { display: grid; gap: 4px; justify-items: center; }
.capsicons svg { width: 9px; height: 9px; }
.tray {
  display: flex;
  align-items: center;
  gap: 8px;
  height: 23px;
  margin-left: 4px;
  padding: 0 3px 0 6px;
  border: 1px solid;
  border-color: var(--shadow) #fff #fff var(--shadow);
}
.up { width: 6px; height: 10px; }
.tray time { margin-left: 5px; }
```
